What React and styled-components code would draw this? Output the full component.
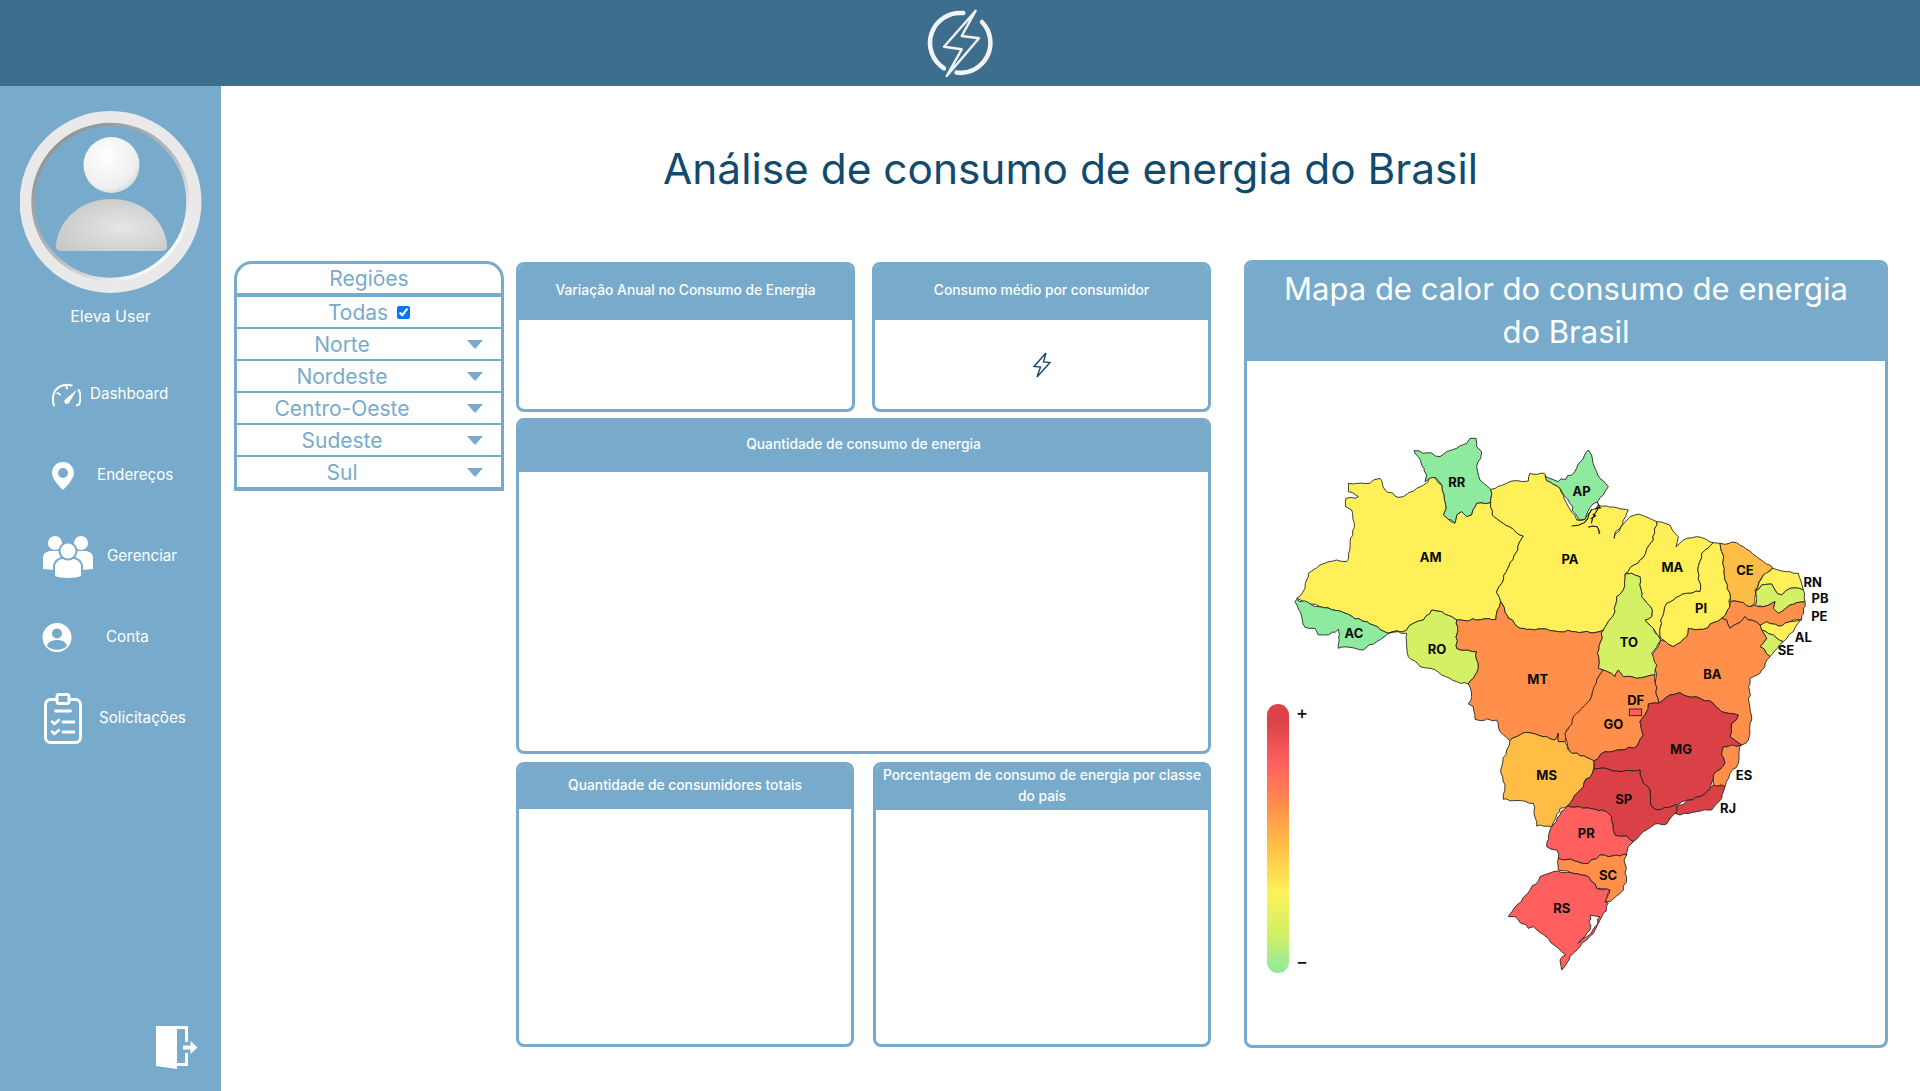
import React from "react";
import styled, { createGlobalStyle } from "styled-components";

const blue = "#78abcb";

const GlobalStyle = createGlobalStyle`
  html, body { margin: 0; padding: 0; background: #fff; }
  * { box-sizing: border-box; }
  body { font-family: Inter, "Open Sans", "Liberation Sans", sans-serif; }
`;

const Layout = styled.div`
  height: 100vh;
  min-height: 1091px;
  display: grid;
  grid-template-rows: 86px 1fr;
  grid-template-columns: 221px 1fr;
  overflow: hidden;
`;

const TopBar = styled.header`
  grid-column: 1 / -1;
  background: #3d6e8d;
  display: flex;
  align-items: center;
  justify-content: center;
  padding-left: 2px;
`;

const Sidebar = styled.aside`
  background: ${blue};
  display: flex;
  flex-direction: column;
  align-items: stretch;
  padding: 24px 0 22px;
  color: #fff;
`;

const AvatarWrap = styled.div`
  display: flex;
  justify-content: center;
`;

const UserName = styled.div`
  margin-top: 10px;
  text-align: center;
  font-size: 16px;
  line-height: 24px;
`;

const Nav = styled.nav`
  margin-top: 26px;
  display: flex;
  flex-direction: column;
`;

const NavItem = styled.a`
  height: 81px;
  display: flex;
  align-items: center;
  padding-left: ${p => p.$left}px;
  gap: ${p => p.$gap}px;
  font-size: 15.2px;
  color: #fff;
`;

const NavLabel = styled.span`
  margin-top: -2px;
`;

const ExitButton = styled.a`
  margin-top: auto;
  align-self: flex-end;
  margin-right: 22px;
  display: flex;
`;

const Main = styled.main`
  min-width: 0;
`;

const Title = styled.h1`
  margin: 0;
  height: 174px;
  padding-top: 53px;
  line-height: 60px;
  text-align: center;
  font-size: 42.4px;
  font-weight: 400;
  color: #124a6e;
`;

const Columns = styled.div`
  display: grid;
  grid-template-columns: 270px 707px 677px;
  align-items: start;
  padding-left: 13px;
`;

const Regions = styled.div`
  border: solid ${blue};
  border-width: 3px 3px 4px;
  border-radius: 18px 18px 0 0;
  margin-top: 1px;
  color: ${blue};
  font-size: 21px;
`;

const RegionTitle = styled.div`
  height: 33px;
  border-bottom: 4px solid ${blue};
  display: flex;
  align-items: center;
  justify-content: center;
`;

const RegionRow = styled.div`
  height: ${p => (p.$last ? 30 : 32)}px;
  display: flex;
  align-items: center;
  border-bottom: ${p => (p.$last ? "0" : `2px solid ${blue}`)};
`;

const AllRow = styled(RegionRow)`
  justify-content: center;
  gap: 9px;
`;

const RegionLabel = styled.span`
  width: 210px;
  text-align: center;
`;

const Arrow = styled.span`
  margin-left: 20px;
  width: 0;
  height: 0;
  border-left: 8px solid transparent;
  border-right: 8px solid transparent;
  border-top: 9px solid ${blue};
`;

const Check = styled.input`
  margin: 0;
  width: 13px;
  height: 13px;
`;

const Cards = styled.div`
  margin: 2px 0 0 12px;
  width: 695px;
  display: flex;
  flex-direction: column;
`;

const CardRow = styled.div`
  display: flex;
  justify-content: space-between;
  height: ${p => p.$height}px;
  margin-top: ${p => p.$top || 0}px;
`;

const Card = styled.section`
  width: ${p => p.$width || "100%"};
  height: ${p => (p.$height ? `${p.$height}px` : "100%")};
  margin-top: ${p => p.$top || 0}px;
  border: 3px solid ${blue};
  border-radius: 8px;
  display: flex;
  flex-direction: column;
  overflow: hidden;
`;

const CardHead = styled.h2`
  margin: 0;
  flex: 0 0 ${p => p.$head}px;
  background: ${blue};
  color: #fff;
  font-size: 13.8px;
  font-weight: 500;
  line-height: 20.5px;
  text-align: center;
  display: flex;
  align-items: center;
  justify-content: center;
  padding: 0 4px 4px;
`;

const CardBody = styled.div`
  flex: 1;
  display: flex;
  align-items: center;
  justify-content: center;
`;

const HeatCard = styled.section`
  margin-left: 33px;
  height: 788px;
  width: 644px;
  border: 3px solid ${blue};
  border-radius: 8px;
  display: flex;
  flex-direction: column;
  overflow: hidden;
`;

const HeatHead = styled.h2`
  margin: 0;
  height: 98px;
  flex: none;
  background: ${blue};
  color: #fff;
  font-size: 31px;
  font-weight: 400;
  line-height: 43px;
  text-align: center;
  padding: 4px 30px 0;
`;

const HeatBody = styled.div`
  padding: 74px 0 0 20px;
  display: grid;
  grid-template-columns: 23px auto;
  justify-content: start;
  align-items: start;
`;

const LegendBar = styled.div`
  position: relative;
  margin-top: 269px;
  width: 22px;
  height: 269px;
  border-radius: 11px;
  background: linear-gradient(
    to bottom,
    #dc4348 0%,
    #dc4348 7%,
    #ff5f5f 22%,
    #ff8f4c 38%,
    #ffbc45 52%,
    #fdf25a 70%,
    #d4ef65 85%,
    #8eea9f 100%
  );
`;

const LegendMark = styled.span`
  position: absolute;
  left: 29px;
  top: ${p => p.$top}px;
  font-size: 18px;
  font-weight: 500;
  line-height: 18px;
  color: #111;
`;

const Logo = () => (
  <svg width="72" height="72" viewBox="0 0 72 72" fill="none" stroke="#f2f4f6">
    <path d="M38.3 6.100A30 30 0 0 0 19 61.300" strokeWidth="4.500" strokeLinecap="round" />
    <path d="M57 15A30 30 0 0 1 31.500 65.600" strokeWidth="4.500" strokeLinecap="round" />
    <path d="M50.700 3.700 19 39.700l17.700 2.600-15 26.700L54 31.300 36.700 29z" strokeWidth="2.400" strokeLinejoin="round" />
  </svg>
);

const Avatar = () => (
  <svg width="182" height="184" viewBox="0 0 182 184">
    <defs>
      <linearGradient id="ringInner" x1="0.15" y1="0.1" x2="0.85" y2="0.9">
        <stop offset="0" stopColor="#8f9396" />
        <stop offset="0.55" stopColor="#b9bcbe" />
        <stop offset="1" stopColor="#ffffff" />
      </linearGradient>
      <radialGradient id="head" cx="0.4" cy="0.35" r="0.8">
        <stop offset="0" stopColor="#ffffff" />
        <stop offset="0.7" stopColor="#eeeeee" />
        <stop offset="1" stopColor="#c9c9c9" />
      </radialGradient>
      <radialGradient id="torso" cx="0.6" cy="0.55" r="0.75">
        <stop offset="0" stopColor="#e6e6e6" />
        <stop offset="1" stopColor="#c4c4c4" />
      </radialGradient>
    </defs>
    <circle cx="90.500" cy="92" r="84" fill="none" stroke="#e9e9e9" strokeWidth="14" />
    <circle cx="90.500" cy="92" r="77.500" fill="none" stroke="url(#ringInner)" strokeWidth="3.500" />
    <circle cx="91.500" cy="55" r="28" fill="url(#head)" />
    <path
      d="M36 134C40 107 63 89 91.500 89S143 107 147 134c.6 5-1 7-5 7H41c-4 0-5.600-2-5-7z"
      fill="url(#torso)"
    />
  </svg>
);

const GaugeIcon = () => (
  <svg width="30" height="24" viewBox="0 0 30 24" fill="none" stroke="#fff" strokeWidth="2" strokeLinecap="round">
    <path d="M3 22.500C.4 15 2.500 7 9 3.500c3.500-1.800 8-2 11.500-1" />
    <path d="M27.800 7c2 4.500 2 10 .2 14.500l-2 .8" />
    <path d="M15 2l1 3.500M6.500 10l2.500 1.500" />
    <path d="M26 6.500 18 20c-1.500 1.600-4 1-4.500-.8-.3-1.200.1-2.200 1-3z" fill="#fff" stroke="none" />
  </svg>
);

const PinIcon = () => (
  <svg width="22" height="28" viewBox="0 0 22 28">
    <path
      fill="#fff"
      fillRule="evenodd"
      d="M11 0C4.900 0 0 4.900 0 11c0 7 11 17 11 17s11-10 11-17C22 4.900 17.100 0 11 0zm0 6a5 5 0 1 1 0 10 5 5 0 0 1 0-10z"
    />
  </svg>
);

const UsersIcon = () => (
  <svg width="50" height="42" viewBox="0 0 50 42">
    <circle cx="12" cy="7" r="7" fill="#fff" />
    <circle cx="38" cy="7" r="7" fill="#fff" />
    <path d="M0 22c0-5 4-7 8-7h8c4 0 8 2 8 7v13L0 33zM26 22c0-5 4-7 8-7h8c4 0 8 2 8 7v11l-24 2z" fill="#fff" />
    <path
      d="M11 41V31c0-6 5-9 9-9h10c4 0 9 3 9 9v10s-6 2-14 2-14-2-14-2z"
      fill="#fff"
      stroke={blue}
      strokeWidth="2"
    />
    <circle cx="25" cy="15" r="8.500" fill="#fff" stroke={blue} strokeWidth="2" />
  </svg>
);

const AccountIcon = () => (
  <svg width="30" height="29" viewBox="0 0 30 29">
    <circle cx="15" cy="14.500" r="14.500" fill="#fff" />
    <circle cx="15" cy="10.500" r="5" fill={blue} />
    <path d="M5 23c1-4 5-6 10-6s9 2 10 6c-2.500 2.500-6 3.800-10 3.800S7.500 25.500 5 23z" fill={blue} />
  </svg>
);

const ClipboardIcon = () => (
  <svg width="38" height="51" viewBox="0 0 38 51" fill="none" stroke="#fff" strokeLinecap="round" strokeLinejoin="round">
    <rect x="1.500" y="6.500" width="35" height="43" rx="5" strokeWidth="3" />
    <rect x="13" y="1.500" width="12" height="9" rx="2" strokeWidth="3" fill={blue} />
    <path d="M11.500 18h15M19 29h11M19 39h11" strokeWidth="2.800" />
    <path d="M8 28.500l2.500 2.500 4.500-4M8 38.500l2.500 2.500 4.500-4" strokeWidth="2.500" />
  </svg>
);

const ExitIcon = () => (
  <svg width="43" height="43" viewBox="0 0 43 43" fill="#fff">
    <path d="M0 0h32v16h-3V3H20l1 0v40L0 40z" />
    <path d="M21 37h8V27h3v13H21z" />
    <path d="M27 19.500h7.500V15l7 6.500-7 6.500v-4.500H27z" />
  </svg>
);

const BoltIcon = () => (
  <svg width="18" height="26" viewBox="0 0 18 26" fill="none" stroke="#124a6e" strokeWidth="1.400" strokeLinejoin="miter">
    <path d="M13 1 1 14.500l6.500.6L4 25 17 10.500l-6.500-.6z" />
  </svg>
);

const yellow = "#fff05a";
const green = "#8eea9f";
const lime = "#d4f065";
const orange = "#ff8f4a";
const amber = "#ffbd45";
const red = "#ff5f5f";
const wine = "#d94147";

// coordinates are in thirds of a pixel
const states = [
  [green, "462,92 490,100 505,98 540,110 560,95 590,85 620,70 630,55 648,55 650,80 665,95 662,115 650,140 660,180 692,208 692,248 650,250 635,285 620,290 605,275 590,285 585,310 565,298 550,285 558,265 552,225 545,195 525,172 495,185 500,165 485,135 475,110"],
  [yellow, "265,190 330,190 340,180 360,175 375,210 405,228 430,230 470,205 520,172 545,195 552,225 558,265 550,285 585,310 590,285 605,275 620,290 635,285 650,250 692,248 697,285 730,310 790,348 710,518 722,545 708,598 590,600 575,590 545,575 515,570 490,600 460,610 440,630 385,640 330,612 245,575 180,560 110,535 135,505 145,460 180,435 230,420 260,425 283,310 275,270 257,260 258,235 295,230 265,215"],
  [green, "105,545 110,538 180,560 245,575 330,612 385,640 350,665 310,690 270,682 235,685 235,628 205,645 175,645 165,625 135,622 125,590"],
  [lime, "385,640 440,630 460,610 490,600 515,570 545,575 575,590 590,600 590,685 650,695 650,720 655,745 640,775 625,792 590,785 545,765 510,745 480,740 445,710 440,680 440,640 415,635"],
  [yellow, "692,208 750,185 805,183 810,160 855,162 860,182 900,205 920,250 950,300 975,298 995,270 1015,255 1040,258 1105,270 1088,312 1066,335 1062,355 1090,312 1110,290 1135,282 1190,305 1180,360 1140,420 1095,462 1090,510 1070,530 1065,575 1030,630 990,638 780,625 745,595 722,545 710,518 790,348 730,310 697,285 692,248"],
  [green, "855,168 895,185 935,165 985,90 995,105 1005,145 1020,175 1045,200 1030,225 990,262 975,298 955,300 930,250 900,205 860,182"],
  [yellow, "1190,305 1230,315 1255,350 1248,380 1280,355 1310,350 1360,368 1325,400 1315,440 1320,515 1280,520 1220,550 1202,600 1202,655 1180,625 1155,600 1175,590 1177,570 1145,530 1140,470 1115,460 1095,462 1140,420 1180,360"],
  [yellow, "1360,368 1380,370 1390,420 1395,480 1410,520 1410,560 1385,595 1330,628 1285,625 1280,650 1240,680 1202,655 1202,600 1220,550 1280,520 1320,515 1315,440 1325,400"],
  [amber, "1380,370 1430,368 1490,410 1538,442 1510,465 1485,510 1485,550 1470,560 1450,548 1410,545 1410,520 1395,480 1390,420"],
  [yellow, "1538,445 1590,455 1615,460 1630,510 1590,505 1565,525 1545,510 1535,492 1505,495 1488,512 1510,465"],
  [lime, "1488,512 1505,495 1535,492 1545,510 1565,525 1590,505 1630,510 1635,545 1590,555 1555,580 1540,565 1545,545 1510,560 1485,560"],
  [orange, "1410,545 1450,548 1470,560 1485,555 1510,560 1545,545 1540,565 1555,580 1590,555 1635,545 1625,600 1590,605 1555,618 1520,605 1500,615 1455,590 1410,625 1400,600 1385,595 1410,560"],
  [yellow, "1500,618 1520,605 1555,618 1590,605 1622,600 1600,635 1570,665 1540,645 1505,630"],
  [lime, "1505,630 1540,645 1570,665 1530,710 1500,680 1520,655"],
  [orange, "1202,660 1240,680 1280,650 1285,625 1330,628 1385,595 1400,600 1410,625 1455,590 1500,615 1505,630 1520,655 1500,680 1530,710 1500,760 1470,775 1468,850 1475,900 1465,960 1445,975 1410,950 1415,910 1435,885 1385,875 1360,850 1320,835 1285,830 1260,818 1230,825 1195,850 1195,840 1185,790 1190,760 1185,735 1175,710 1195,680"],
  [lime, "1095,462 1115,460 1140,470 1145,530 1177,570 1175,590 1155,600 1180,625 1202,660 1175,700 1190,735 1185,765 1130,775 1090,770 1075,750 1065,770 1030,750 1015,745 1012,700 1030,630 1065,575 1070,530 1090,510"],
  [orange, "590,600 708,598 722,545 745,595 780,625 990,638 1030,630 1012,700 1015,745 1030,750 1010,780 990,850 975,880 945,890 920,930 915,965 895,965 895,940 885,960 860,950 800,937 750,962 720,935 710,900 645,898 640,860 625,852 635,830 625,792 640,775 655,745 650,720 650,695 590,685"],
  [orange, "1030,750 1065,770 1075,750 1090,770 1130,775 1185,765 1185,790 1195,840 1195,850 1165,852 1160,875 1140,905 1150,945 1130,980 1035,995 1002,1023 930,995 922,970 915,940 950,880 990,840 1010,780"],
  [amber, "750,962 800,937 860,950 885,960 895,940 895,965 915,965 930,995 1002,1023 1000,1050 960,1110 922,1158 900,1165 875,1220 830,1218 820,1150 730,1138 735,1095 722,1050 740,990"],
  [wine, "1002,1023 1035,995 1130,980 1150,945 1140,905 1160,875 1165,852 1195,850 1230,825 1260,818 1285,830 1320,835 1360,850 1385,875 1435,885 1415,910 1410,950 1445,975 1390,980 1385,1005 1395,1030 1360,1065 1350,1105 1320,1130 1245,1155 1190,1170 1175,1160 1170,1110 1150,1090 1140,1050 1080,1055 1020,1045 1002,1047"],
  [orange, "1390,980 1442,975 1435,1030 1410,1060 1395,1100 1360,1095 1360,1065 1395,1030 1385,1005"],
  [wine, "1360,1095 1395,1100 1385,1135 1355,1170 1310,1175 1260,1185 1245,1180 1250,1158 1320,1130 1350,1105"],
  [wine, "1002,1047 1020,1045 1080,1055 1140,1050 1150,1090 1170,1110 1175,1160 1190,1170 1245,1155 1250,1158 1245,1180 1235,1190 1220,1212 1185,1212 1150,1235 1120,1265 1100,1248 1065,1245 1055,1190 1040,1175 960,1160 922,1158 960,1110 1000,1050"],
  [red, "922,1158 960,1160 1040,1175 1055,1190 1065,1245 1100,1248 1120,1265 1105,1280 1100,1305 1045,1310 1020,1305 985,1330 895,1315 890,1290 860,1280 872,1225 900,1185"],
  [orange, "895,1315 985,1330 1020,1305 1045,1310 1100,1305 1092,1320 1100,1370 1090,1410 1050,1445 1035,1445 1050,1410 1010,1405 985,1370 930,1357 895,1350"],
  [red, "895,1353 930,1357 985,1370 1010,1405 1050,1412 1035,1445 1045,1450 1020,1500 1005,1530 960,1580 930,1610 905,1650 900,1620 918,1605 895,1585 865,1555 820,1520 805,1525 765,1490 745,1490 810,1410 840,1370"],
  ["#fff", "990,1485 1020,1490 1005,1520 980,1550 960,1565 955,1570 990,1530"],
];

// the real borders are jagged: add small offsets that only depend on the segment, so neighbours still share them
const wobble = (x, y) => {
  const v = Math.sin(x * 12.9898 + y * 78.233) * 43758.5453;
  return (v - Math.floor(v) - 0.5) * 7;
};

const roughen = points => {
  const pts = points.split(" ").map(p => p.split(",").map(Number));
  const out = [];
  pts.forEach((a, i) => {
    const b = pts[(i + 1) % pts.length];
    const flip = a[0] > b[0] || (a[0] === b[0] && a[1] > b[1]);
    const [s, e] = flip ? [b, a] : [a, b];
    const steps = Math.floor(Math.hypot(e[0] - s[0], e[1] - s[1]) / 11);
    const inner = [];
    for (let k = 1; k < steps; k++) {
      const x = s[0] + ((e[0] - s[0]) * k) / steps;
      const y = s[1] + ((e[1] - s[1]) * k) / steps;
      inner.push([x + wobble(x, y), y + wobble(y, x)]);
    }
    if (flip) inner.reverse();
    out.push(a, ...inner);
  });
  return out.map(p => p.map(n => n.toFixed(1)).join(",")).join(" ");
};

const labels = [
  ["RR", 590, 185], ["AP", 965, 212], ["AM", 512, 412], ["PA", 930, 418], ["AC", 282, 640],
  ["RO", 531, 688], ["MT", 833, 778], ["MA", 1237, 440], ["CE", 1455, 450], ["PI", 1323, 565],
  ["TO", 1107, 665], ["BA", 1357, 763], ["DF", 1127, 840], ["RN", 1658, 487], ["PB", 1680, 535],
  ["PE", 1678, 589], ["AL", 1630, 652], ["SE", 1578, 690], ["GO", 1060, 912], ["MG", 1263, 988],
  ["MS", 860, 1064], ["SP", 1091, 1138], ["PR", 979, 1240], ["SC", 1044, 1366], ["RS", 905, 1465],
  ["ES", 1452, 1066], ["RJ", 1404, 1165],
];

const MapLabel = styled.text`
  font-family: Inter, "Liberation Sans", sans-serif;
  font-size: 39px;
  font-weight: 700;
  fill: #0a0a0a;
  text-anchor: middle;
  dominant-baseline: central;
`;

const BrazilMap = () => (
  <svg width="550" height="540" viewBox="90 45 1650 1620">
    {states.map(([fill, points], i) => (
      <polygon key={i} points={roughen(points)} fill={fill} stroke="#1f1f1f" strokeWidth="2.600" strokeLinejoin="round" />
    ))}
    <rect x="1108" y="867" width="37" height="20" fill={red} stroke="#1f1f1f" strokeWidth="2.600" />
    <path
      d="M935 318l20-2 18-8 10-12 4-14 8-14M1012 246l6 14-14 22-6 12-4 16M992 296l14-8M985 322l12-4 14 2 5 8 2 14M1014 330l6 8M1006 268l8-6 10 2M998 282l10 6"
      fill="none"
      stroke="#111"
      strokeWidth="3.200"
    />
    {labels.map(([name, x, y]) => (
      <MapLabel key={name} x={x} y={y}>{name}</MapLabel>
    ))}
  </svg>
);

const regionNames = ["Norte", "Nordeste", "Centro-Oeste", "Sudeste", "Sul"];

export default function App() {
  return (
    <Layout>
      <GlobalStyle />
      <TopBar>
        <Logo />
      </TopBar>
      <Sidebar>
        <AvatarWrap>
          <Avatar />
        </AvatarWrap>
        <UserName>Eleva User</UserName>
        <Nav>
          <NavItem $left={51} $gap={9}><GaugeIcon /><NavLabel>Dashboard</NavLabel></NavItem>
          <NavItem $left={52} $gap={23}><PinIcon /><NavLabel>Endereços</NavLabel></NavItem>
          <NavItem $left={43} $gap={14}><UsersIcon /><NavLabel>Gerenciar</NavLabel></NavItem>
          <NavItem $left={42} $gap={34}><AccountIcon /><NavLabel>Conta</NavLabel></NavItem>
          <NavItem $left={44} $gap={17}><ClipboardIcon /><NavLabel>Solicitações</NavLabel></NavItem>
        </Nav>
        <ExitButton>
          <ExitIcon />
        </ExitButton>
      </Sidebar>
      <Main>
        <Title>Análise de consumo de energia do Brasil</Title>
        <Columns>
          <Regions>
            <RegionTitle>Regiões</RegionTitle>
            <AllRow>
              Todas
              <Check type="checkbox" defaultChecked />
            </AllRow>
            {regionNames.map((name, i) => (
              <RegionRow key={name} $last={i === regionNames.length - 1}>
                <RegionLabel>{name}</RegionLabel>
                <Arrow />
              </RegionRow>
            ))}
          </Regions>
          <Cards>
            <CardRow $height={150}>
              <Card $width="339px">
                <CardHead $head={55}>Variação Anual no Consumo de Energia</CardHead>
              </Card>
              <Card $width="339px">
                <CardHead $head={55}>Consumo médio por consumidor</CardHead>
                <CardBody>
                  <BoltIcon />
                </CardBody>
              </Card>
            </CardRow>
            <Card $height={336} $top={6}>
              <CardHead $head={51}>Quantidade de consumo de energia</CardHead>
            </Card>
            <CardRow $height={285} $top={8}>
              <Card $width="338px">
                <CardHead $head={44}>Quantidade de consumidores totais</CardHead>
              </Card>
              <Card $width="338px">
                <CardHead $head={44}>Porcentagem de consumo de energia por classe do país</CardHead>
              </Card>
            </CardRow>
          </Cards>
          <HeatCard>
            <HeatHead>Mapa de calor do consumo de energia do Brasil</HeatHead>
            <HeatBody>
              <LegendBar>
                <LegendMark $top={0}>+</LegendMark>
                <LegendMark $top={249}>−</LegendMark>
              </LegendBar>
              <BrazilMap />
            </HeatBody>
          </HeatCard>
        </Columns>
      </Main>
    </Layout>
  );
}
